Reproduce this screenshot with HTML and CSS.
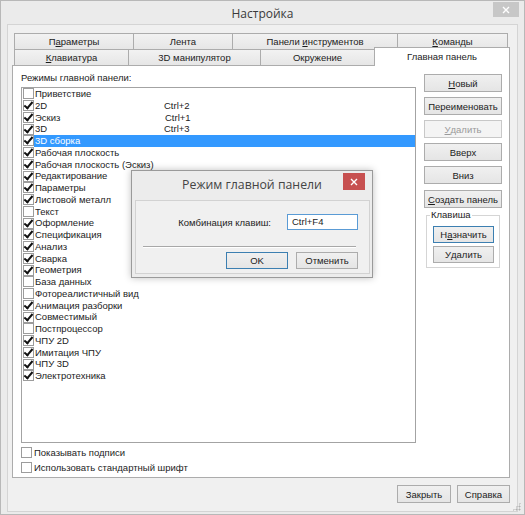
FILE: index.html
```html
<!DOCTYPE html>
<html lang="ru">
<head>
<meta charset="utf-8">
<title>Настройка</title>
<link rel="stylesheet" href="styles.css">
</head>
<body>
<div class="window">
  <div class="titlebar">
    <span></span>
    <span class="title">Настройка</span>
    <span class="tb-right"><span class="close inactive"><svg width="8" height="8" viewBox="0 0 8 8"><path d="M1 1L7 7M7 1L1 7" stroke="#fff" stroke-width="1.4"/></svg></span></span>
  </div>
  <div class="client">
    <div class="tabs">
      <div class="tabrow">
        <div class="tab t-param">П<u>а</u>раметры</div>
        <div class="tab t-lenta">Лента</div>
        <div class="tab t-panels">Панели <u>и</u>нструментов</div>
        <div class="tab t-cmds"><u>К</u>оманды</div>
      </div>
      <div class="tabrow front">
        <div class="tab t-keys"><u>К</u>лавиатура</div>
        <div class="tab t-manip">3D манипулятор</div>
        <div class="tab t-env">Окружение</div>
        <div class="tab t-main active">Главная панель</div>
      </div>
    </div>
    <div class="page">
      <div class="left">
        <div class="caption">Режимы главной панели:</div>
        <div class="list">
          <div class="row"><span class="cb"></span><span class="txt"><span class="name">Приветствие</span></span></div>
          <div class="row"><span class="cb on"></span><span class="txt"><span class="name">2D</span><span class="key">Ctrl+2</span></span></div>
          <div class="row"><span class="cb on"></span><span class="txt"><span class="name">Эскиз</span><span class="key k1">Ctrl+1</span></span></div>
          <div class="row"><span class="cb on"></span><span class="txt"><span class="name">3D</span><span class="key">Ctrl+3</span></span></div>
          <div class="row sel"><span class="cb on"></span><span class="txt"><span class="name">3D сборка</span></span></div>
          <div class="row"><span class="cb on"></span><span class="txt"><span class="name">Рабочая плоскость</span></span></div>
          <div class="row"><span class="cb on"></span><span class="txt"><span class="name">Рабочая плоскость (Эскиз)</span></span></div>
          <div class="row"><span class="cb on"></span><span class="txt"><span class="name">Редактирование</span></span></div>
          <div class="row"><span class="cb on"></span><span class="txt"><span class="name">Параметры</span></span></div>
          <div class="row"><span class="cb on"></span><span class="txt"><span class="name">Листовой металл</span></span></div>
          <div class="row"><span class="cb"></span><span class="txt"><span class="name">Текст</span></span></div>
          <div class="row"><span class="cb on"></span><span class="txt"><span class="name">Оформление</span></span></div>
          <div class="row"><span class="cb on"></span><span class="txt"><span class="name">Спецификация</span></span></div>
          <div class="row"><span class="cb on"></span><span class="txt"><span class="name">Анализ</span></span></div>
          <div class="row"><span class="cb on"></span><span class="txt"><span class="name">Сварка</span></span></div>
          <div class="row"><span class="cb on"></span><span class="txt"><span class="name">Геометрия</span></span></div>
          <div class="row"><span class="cb"></span><span class="txt"><span class="name">База данных</span></span></div>
          <div class="row"><span class="cb"></span><span class="txt"><span class="name">Фотореалистичный вид</span></span></div>
          <div class="row"><span class="cb on"></span><span class="txt"><span class="name">Анимация разборки</span></span></div>
          <div class="row"><span class="cb on"></span><span class="txt"><span class="name">Совместимый</span></span></div>
          <div class="row"><span class="cb"></span><span class="txt"><span class="name">Постпроцессор</span></span></div>
          <div class="row"><span class="cb on"></span><span class="txt"><span class="name">ЧПУ 2D</span></span></div>
          <div class="row"><span class="cb on"></span><span class="txt"><span class="name">Имитация ЧПУ</span></span></div>
          <div class="row"><span class="cb on"></span><span class="txt"><span class="name">ЧПУ 3D</span></span></div>
          <div class="row"><span class="cb on"></span><span class="txt"><span class="name">Электротехника</span></span></div>
        </div>
        <div class="opts">
          <div class="opt"><span class="cb"></span><span>Показывать подписи</span></div>
          <div class="opt"><span class="cb"></span><span>Использовать стандартный шрифт</span></div>
        </div>
      </div>
      <div class="right">
        <div class="btn"><u>Н</u>овый</div>
        <div class="btn">Переименовать</div>
        <div class="btn disabled"><u>У</u>далить</div>
        <div class="btn">Вверх</div>
        <div class="btn">Вниз</div>
        <div class="btn create"><u>С</u>оздать панель</div>
        <fieldset class="group">
          <legend>Клавиша</legend>
          <div class="btn small default">Н<u>а</u>значить</div>
          <div class="btn small">У<u>д</u>алить</div>
        </fieldset>
      </div>
    </div>
    <div class="bottom">
      <div class="btn b-close">Закрыть</div>
      <div class="btn b-help">Справка</div>
    </div>
  </div>
  <div class="grip"></div>
</div>

<div class="modal">
  <div class="titlebar m-title">
    <span></span>
    <span class="title">Режим главной панели</span>
    <span class="tb-right"><span class="close red"><svg width="8" height="8" viewBox="0 0 8 8"><path d="M1 1L7 7M7 1L1 7" stroke="#fff" stroke-width="1.4"/></svg></span></span>
  </div>
  <div class="m-client">
    <div class="m-row">
      <span class="m-label">Комбинация клавиш:</span>
      <span class="input">Ctrl+F4</span>
    </div>
    <div class="sep"></div>
    <div class="m-buttons">
      <div class="btn m-btn default">OK</div>
      <div class="btn m-btn">Отменить</div>
    </div>
  </div>
</div>
</body>
</html>
```
FILE: styles.css
```css
html, body {
  margin: 0;
  padding: 0;
  background: #ebebeb;
}
body {
  position: relative;
  width: 525px;
  height: 515px;
  overflow: hidden;
  font-family: "Liberation Sans", Arial, sans-serif;
  font-size: 9.5px;
  color: #1c1c1c;
}
u { text-decoration: underline; text-underline-offset: 1px; }

.window {
  position: relative;
  width: 525px;
  height: 515px;
  box-sizing: border-box;
  border: 1px solid #b8b8b8;
  background: #ebebeb;
  display: flex;
  flex-direction: column;
}

.titlebar {
  height: 23px;
  flex: none;
  display: grid;
  grid-template-columns: 1fr auto 1fr;
  align-items: start;
}
.title {
  font-family: "Open Sans", "Liberation Sans", sans-serif;
  font-size: 12px;
  color: #3a3a3a;
  line-height: 16px;
  padding-top: 5px;
}
.tb-right {
  display: flex;
  justify-content: flex-end;
}
.close {
  display: grid;
  place-items: center;
}
.close.inactive {
  width: 26px;
  height: 15px;
  margin-top: 1px;
  margin-right: 5px;
  background: #c7c7c7;
}

.client {
  flex: 1;
  margin: 0 6px 2px 6px;
  background: #f0f0f0;
  border: 1px solid #d4d4d4;
  display: flex;
  flex-direction: column;
}

.tabs {
  margin-left: 6px;
  padding-top: 8px;
}
.tabrow {
  display: flex;
  height: 16px;
}
.tabrow.front { align-items: flex-end; }
.tab {
  box-sizing: border-box;
  height: 16px;
  border: 1px solid #acacac;
  border-right: none;
  border-bottom: none;
  background: linear-gradient(#f2f2f2, #e6e6e6);
  text-align: center;
  line-height: 15px;
  white-space: nowrap;
}
.tab:last-child { border-right: 1px solid #acacac; }
.t-param { width: 119px; }
.t-lenta { width: 99px; }
.t-panels { width: 165px; }
.t-cmds { width: 111px; }
.t-keys { width: 114px; }
.t-manip { width: 132px; }
.t-env { width: 114px; }
.t-main { width: 136px; }
.tab.active {
  position: relative;
  z-index: 1;
  height: 19px;
  margin-bottom: -1px;
  background: #fff;
  line-height: 17px;
}

.page {
  margin-left: 4px;
  width: 498px;
  height: 413px;
  box-sizing: border-box;
  border: 1px solid #acacac;
  background: #fff;
  display: flex;
}

.left {
  margin-left: 8px;
  padding-top: 6px;
  width: 395px;
  display: flex;
  flex-direction: column;
}
.caption {
  line-height: 12px;
  height: 12px;
}
.list {
  margin-top: 3px;
  height: 356px;
  box-sizing: border-box;
  border: 1px solid #a3a3a3;
  background: #fff;
}
.row {
  height: 11.75px;
  display: flex;
  align-items: center;
}
.cb {
  flex: none;
  width: 11px;
  height: 11px;
  box-sizing: border-box;
  border: 1px solid #9c9c9c;
  background: #fff;
  display: grid;
  place-items: center;
}
.row .cb { margin-left: 1px; }
.cb.on::after {
  content: "";
  width: 3px;
  height: 7px;
  margin-top: -2px;
  border-right: 2px solid #111;
  border-bottom: 2px solid #111;
  transform: rotate(40deg);
}
.txt {
  flex: 1;
  height: 11.75px;
  line-height: 11.75px;
  padding-left: 1px;
  display: flex;
  white-space: nowrap;
}
.name { width: 129px; }
.key.k1 { padding-left: 1px; }
.row.sel .txt {
  background: #3399ff;
  color: #fff;
}

.opts {
  margin-top: 3px;
  display: flex;
  flex-direction: column;
  gap: 3px;
}
.opt {
  display: flex;
  align-items: center;
  height: 12px;
  gap: 2px;
}

.right {
  margin-left: 8px;
  padding-top: 8px;
  width: 78px;
  display: flex;
  flex-direction: column;
}
.btn {
  box-sizing: border-box;
  height: 18px;
  border: 1px solid #acacac;
  background: linear-gradient(#f0f0f0, #e5e5e5);
  display: flex;
  align-items: center;
  justify-content: center;
  white-space: nowrap;
}
.right > .btn { margin-bottom: 5px; }
.right > .btn.create { margin-top: 1px; margin-bottom: 0; }
.btn.disabled {
  color: #9a9a9a;
  border-color: #c8c8c8;
  background: #f4f4f4;
}
.btn.default { border-color: #3c7fb1; }

.group {
  margin: 1px 2px 0 2px;
  padding: 0 6px 4px 6px;
  border: 1px solid #d5d5d5;
  min-width: 0;
}
.group legend {
  padding: 0 1px;
  margin-left: -3px;
  line-height: 12px;
}
.btn.small {
  width: 61px;
  height: 17px;
}
.group .btn.default { margin-top: 5px; }
.group .btn + .btn { margin-top: 3px; }

.bottom {
  display: flex;
  justify-content: flex-end;
  gap: 6px;
  margin-top: 7px;
  padding-right: 7px;
}
.b-close { width: 54px; height: 18px; }
.b-help { width: 53px; height: 18px; }

.grip {
  position: absolute;
  right: 3px;
  bottom: 3px;
  width: 9px;
  height: 9px;
  background-image: radial-gradient(circle, #b0b0b0 0.9px, transparent 1.1px);
  background-size: 3px 3px;
  clip-path: polygon(100% 0, 100% 100%, 0 100%);
}

/* modal dialog */
.modal {
  position: absolute;
  left: 131px;
  top: 170px;
  width: 242px;
  height: 108px;
  box-sizing: border-box;
  border: 1px solid #9a9a9a;
  background: #ececec;
  box-shadow: 0 0 7px rgba(0, 0, 0, 0.25);
  display: flex;
  flex-direction: column;
}
.m-title { height: 29px; }
.m-title .title {
  padding-top: 6px;
  font-size: 12.3px;
  color: #444;
}
.close.red {
  width: 22px;
  height: 17px;
  margin-top: 2px;
  margin-right: 7px;
  background: #c75050;
}
.m-client {
  flex: 1;
  margin: 0 2px 3px 3px;
  background: #f0f0f0;
  border: 1px solid #d2d2d2;
  display: flex;
  flex-direction: column;
}
.m-row {
  padding-top: 13px;
  padding-right: 11px;
  display: flex;
  justify-content: flex-end;
  align-items: center;
}
.m-label { margin-right: 16px; }
.input {
  box-sizing: border-box;
  width: 71px;
  height: 16px;
  border: 1px solid #5a9bd5;
  background: #fff;
  padding-left: 4px;
  line-height: 14px;
}
.sep {
  margin: 16px 13px 0 7px;
  height: 1px;
  border-top: 1px solid #a8a8a8;
  background: #fff;
}
.m-buttons {
  margin-top: 4px;
  padding-right: 11px;
  display: flex;
  justify-content: flex-end;
  gap: 8px;
}
.m-btn {
  width: 62px;
  height: 17px;
}
```
